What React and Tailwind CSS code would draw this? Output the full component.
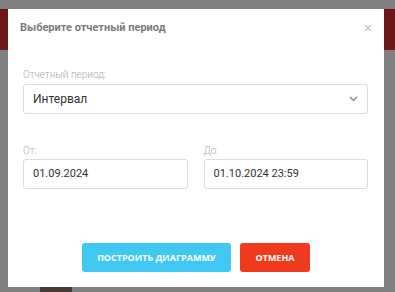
import React from 'react';

const Field = ({ label, value }) => (
  <div className="flex flex-col">
    <span className="h-[14px] mb-[1px] leading-[14px] text-[10px] font-light text-[#a9a9a9]">{label}</span>
    <div className="h-[30px] flex items-center px-[9px] border border-[#dcdcdc] rounded-[3px] text-[11px] text-[#333]">
      {value}
    </div>
  </div>
);

export default function App() {
  return (
    <div className="relative w-[395px] h-[292px] overflow-hidden bg-[#808080] font-['Roboto',sans-serif]">
      {/* page behind the overlay */}
      <div className="absolute left-0 right-0 top-[9px] h-[41px] bg-[#6d1818]" />
      <div className="absolute left-[40px] top-[287px] w-[32px] h-[10px] bg-[#4a3a35]" />

      <div className="relative pt-[9px] pl-[8px] pr-[11px]">
        <div className="bg-white h-[278px] flex flex-col">
          {/* header */}
          <div className="h-[38px] flex items-center justify-between pl-[12px] pr-[12px]">
            <span className="font-bold text-[11px] text-[#7b7b7b]">
              Выберите отчетный период
            </span>
            <span className="text-[15px] leading-none text-[#c8c8c8]">×</span>
          </div>

          {/* body */}
          <div className="pt-[21px] pl-[15px] pr-[16px]">
            <div className="flex flex-col">
              <span className="h-[14px] mb-[2px] leading-[14px] text-[10px] font-light text-[#a9a9a9]">Отчетный период:</span>
              <div className="h-[30px] flex items-center justify-between pl-[9px] pr-[9px] border border-[#dcdcdc] rounded-[3px] text-[12px] text-[#333]">
                <span>Интервал</span>
                <svg width="9" height="6" viewBox="0 0 9 6" fill="none" stroke="#8a8a8a" strokeWidth="1.5">
                  <path d="M1 1l3.5 3.5 3.5-3.5" />
                </svg>
              </div>
            </div>

            <div className="mt-[30px] grid grid-cols-2 gap-[16px]">
              <Field label="От:" value="01.09.2024" />
              <Field label="До:" value="01.10.2024 23:59" />
            </div>
          </div>

          {/* footer */}
          <div className="mt-[54px] flex justify-center gap-[9px] font-['Open_Sans',sans-serif]">
            <button className="w-[149px] h-[29px] rounded-[3px] bg-[#40c8f3] text-white text-[9px] font-bold uppercase">
              Построить диаграмму
            </button>
            <button className="w-[70px] h-[29px] rounded-[3px] bg-[#ef3a1d] text-white text-[9px] font-bold uppercase">
              Отмена
            </button>
          </div>
        </div>
      </div>
    </div>
  );
}
